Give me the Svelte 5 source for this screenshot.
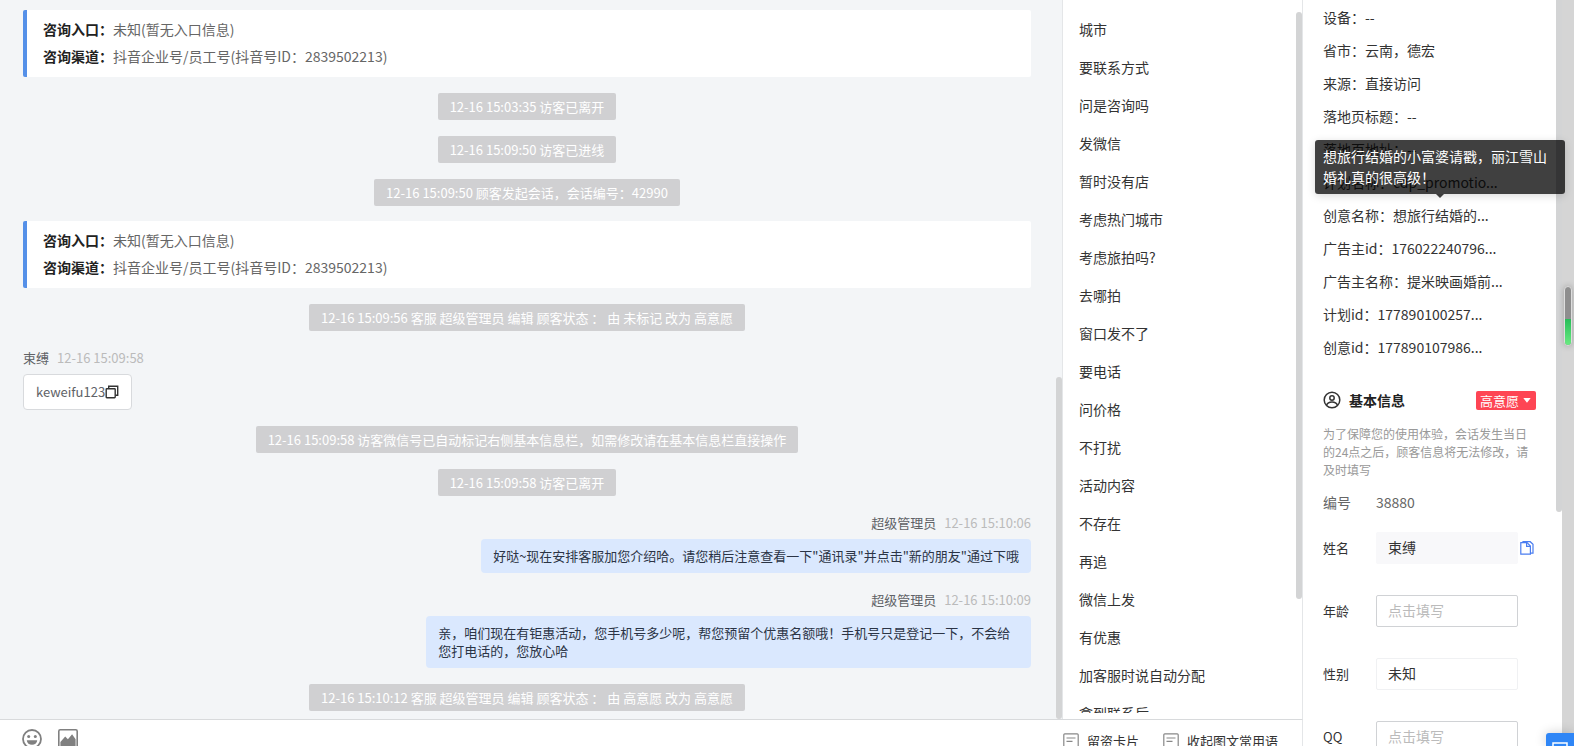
<script>
    const entry = {
        type: 'card',
        rows: [
            ['咨询入口：', '未知(暂无入口信息)'],
            ['咨询渠道：', '抖音企业号/员工号(抖音号ID：2839502213)']
        ]
    };

    const timeline = [
        entry,
        { type: 'notice', text: '12-16 15:03:35 访客已离开' },
        { type: 'notice', text: '12-16 15:09:50 访客已进线' },
        { type: 'notice', text: '12-16 15:09:50 顾客发起会话，会话编号：42990' },
        entry,
        { type: 'notice', text: '12-16 15:09:56 客服 超级管理员 编辑 顾客状态 ： 由 未标记 改为 高意愿' },
        { type: 'message', from: 'visitor', name: '束缚', time: '12-16 15:09:58', text: 'keweifu123' },
        { type: 'notice', text: '12-16 15:09:58 访客微信号已自动标记右侧基本信息栏，如需修改请在基本信息栏直接操作' },
        { type: 'notice', text: '12-16 15:09:58 访客已离开' },
        {
            type: 'message',
            from: 'agent',
            name: '超级管理员',
            time: '12-16 15:10:06',
            text: '好哒~现在安排客服加您介绍哈。请您稍后注意查看一下"通讯录"并点击"新的朋友"通过下哦'
        },
        {
            type: 'message',
            from: 'agent',
            name: '超级管理员',
            time: '12-16 15:10:09',
            text: '亲，咱们现在有钜惠活动，您手机号多少呢，帮您预留个优惠名额哦！手机号只是登记一下，不会给您打电话的，您放心哈'
        },
        { type: 'notice', text: '12-16 15:10:12 客服 超级管理员 编辑 顾客状态 ： 由 高意愿 改为 高意愿' }
    ];

    const phrases = [
        '城市', '要联系方式', '问是咨询吗', '发微信', '暂时没有店', '考虑热门城市',
        '考虑旅拍吗?', '去哪拍', '窗口发不了', '要电话', '问价格', '不打扰', '活动内容',
        '不存在', '再追', '微信上发', '有优惠', '加客服时说自动分配', '拿到联系后'
    ];

    const details = [
        { label: '设备', value: '--' },
        { label: '省市', value: '云南，德宏' },
        { label: '来源', value: '直接访问' },
        { label: '落地页标题', value: '--' },
        { label: '落地页地址', value: '--' },
        { label: '计划名称', value: 'cdp_promotio...' },
        { label: '创意名称', value: '想旅行结婚的...', tip: '想旅行结婚的小富婆请戳，丽江雪山婚礼真的很高级！' },
        { label: '广告主id', value: '176022240796...' },
        { label: '广告主名称', value: '提米映画婚前...' },
        { label: '计划id', value: '177890100257...' },
        { label: '创意id', value: '177890107986...' }
    ];

    let name = '束缚';
    let age = '';
    let gender = '未知';
    let qq = '';
</script>

<div class="page">
    <div class="workspace">
        <div class="panes">
            <section class="chat">
                {#each timeline as item}
                    {#if item.type === 'card'}
                        <div class="card">
                            {#each item.rows as [label, value]}
                                <p><strong>{label}</strong>{value}</p>
                            {/each}
                        </div>
                    {:else if item.type === 'notice'}
                        <p class="notice">{item.text}</p>
                    {:else}
                        <div class="message {item.from}">
                            <div class="meta">
                                <span>{item.name}</span>
                                <time>{item.time}</time>
                            </div>
                            <div class="bubble">
                                {item.text}
                                {#if item.from === 'visitor'}
                                    <button class="icon" aria-label="复制">
                                        <svg width="14" height="14" viewBox="0 0 14 14" fill="none" stroke="#333" stroke-width="1.4">
                                            <rect x="1.2" y="3.7" width="9" height="9" rx="0.6" />
                                            <path d="M3.7 3.5V1.2h9v9h-2.3" />
                                        </svg>
                                    </button>
                                {/if}
                            </div>
                        </div>
                    {/if}
                {/each}
                <div class="thumb chat-thumb"></div>
            </section>

            <nav class="phrases">
                <ul>
                    {#each phrases as phrase}
                        <li><button>{phrase}</button></li>
                    {/each}
                </ul>
                <div class="thumb phrases-thumb"></div>
            </nav>
        </div>

        <footer class="toolbar">
            <button class="icon" aria-label="表情">
                <svg width="20" height="20" viewBox="0 0 20 20">
                    <circle cx="10" cy="10" r="9" fill="none" stroke="#808080" stroke-width="1.8" />
                    <circle cx="6.7" cy="7.6" r="1.5" fill="#808080" />
                    <circle cx="13.3" cy="7.6" r="1.5" fill="#808080" />
                    <path d="M4.8 11.2h10.4a5.2 4.6 0 0 1-10.4 0z" fill="#808080" />
                </svg>
            </button>
            <button class="icon" aria-label="图片">
                <svg width="20" height="20" viewBox="0 0 20 20">
                    <rect x="0.8" y="0.8" width="18.4" height="18.4" rx="1.4" fill="none" stroke="#808080" stroke-width="1.6" />
                    <path d="M2.4 17.6v-4.600l4.800-5.600 2.700 2.800 4.200-5 3.500 5v7.400z" fill="#808080" />
                </svg>
            </button>
            <div class="actions">
                {#each ['留资卡片', '收起图文常用语'] as action}
                    <button>
                        <svg width="16" height="16" viewBox="0 0 16 16" fill="none" stroke="#888" stroke-width="1.2">
                            <rect x="0.8" y="0.8" width="14.4" height="13.4" rx="1" />
                            <path d="M3.5 5h9M3.5 8.4h6" />
                        </svg>
                        {action}
                    </button>
                {/each}
            </div>
        </footer>
    </div>

    <aside class="profile">
        <ul class="details">
            {#each details as detail}
                <li>
                    {detail.label}：{detail.value}
                    {#if detail.tip}
                        <div class="tooltip" role="tooltip">{detail.tip}</div>
                    {/if}
                </li>
            {/each}
        </ul>

        <header>
            <svg width="18" height="18" viewBox="0 0 18 18" fill="none" stroke="#333" stroke-width="1.5">
                <circle cx="9" cy="9" r="7.8" />
                <circle cx="9" cy="7" r="2.2" />
                <path d="M3.6 14.3c.8-2.3 2.8-3.2 5.4-3.2s4.600.9 5.400 3.200" />
            </svg>
            <h2>基本信息</h2>
            <button class="tag">
                高意愿
                <svg width="8" height="5" viewBox="0 0 8 5"><path d="M0.300 0h7.400L4 4.800z" fill="#fff" /></svg>
            </button>
        </header>

        <p class="hint">为了保障您的使用体验，会话发生当日的24点之后，顾客信息将无法修改，请及时填写</p>

        <div class="number"><span>编号</span><span>38880</span></div>

        <form>
            <div class="field">
                <label for="name">姓名</label>
                <input id="name" class="filled" bind:value={name} />
                <button type="button" class="icon" aria-label="复制姓名">
                    <svg width="14" height="14" viewBox="0 0 14 14" fill="none" stroke="#4a7df0" stroke-width="1.2">
                        <path d="M0.800 1.600h6.200l3.400 3.400v8.200H0.800z" />
                        <path d="M6.600 1.800v3.600h3.600" />
                        <path d="M3 1.400V0.700h7.200l2.800 2.600v8.900h-2.400" />
                    </svg>
                </button>
            </div>
            <div class="field">
                <label for="age">年龄</label>
                <input id="age" placeholder="点击填写" bind:value={age} />
            </div>
            <div class="field">
                <label for="gender">性别</label>
                <select id="gender" bind:value={gender}>
                    <option>未知</option>
                    <option>男</option>
                    <option>女</option>
                </select>
            </div>
            <div class="field">
                <label for="qq">QQ</label>
                <input id="qq" placeholder="点击填写" bind:value={qq} />
            </div>
        </form>
        <div class="thumb profile-thumb"></div>
    </aside>

    <div class="edge"></div>
    <div class="meter"><span></span></div>
    <button class="float" aria-label="消息">
        <svg width="16" height="14" viewBox="0 0 16 14" fill="none" stroke="#fff" stroke-width="1.500">
            <path d="M1 1h14v10H9l-3 2v-2H1z" />
        </svg>
    </button>
</div>

<style>
    :global(body) {
        margin: 0;
        overflow: hidden;
    }

    .page {
        position: relative;
        display: flex;
        height: 100vh;
        overflow: hidden;
        background: #fff;
        color: #333;
        font-family: "Noto Sans CJK SC", sans-serif;
        font-size: 14px;
    }

    .page * {
        box-sizing: border-box;
    }

    p, ul, h2 {
        margin: 0;
        padding: 0;
    }

    ul {
        list-style: none;
    }

    button, input, select {
        margin: 0;
        padding: 0;
        border: 0;
        background: none;
        color: inherit;
        font: inherit;
    }

    button {
        cursor: pointer;
    }

    svg {
        display: block;
        flex: none;
    }

    .icon {
        display: flex;
    }

    .thumb {
        position: absolute;
        right: 0;
        width: 6px;
        border-radius: 3px;
        background: #d3d4d5;
    }

    .workspace {
        flex: 1;
        min-width: 0;
        display: flex;
        flex-direction: column;
    }

    .panes {
        flex: 1;
        min-height: 0;
        display: flex;
    }

    .chat {
        position: relative;
        flex: 1;
        min-width: 0;
        display: flex;
        flex-direction: column;
        align-items: center;
        gap: 16px;
        padding: 11px 31px 8px 23px;
        background: #f3f5f7;
        overflow: hidden;
    }

    .chat-thumb {
        bottom: 0;
        height: 342px;
    }

    .card {
        align-self: stretch;
        margin-top: -1px;
        padding: 6px 16px 7px;
        border-left: 4px solid #5590e8;
        border-radius: 2px;
        background: #fff;
        line-height: 27px;
        color: #666;
    }

    .card strong {
        color: #222;
    }

    .notice {
        padding: 0 12px;
        border-radius: 2px;
        background: #d0d0d2;
        color: #fff;
        font-size: 13px;
        line-height: 27px;
    }

    .message {
        align-self: stretch;
        display: flex;
        flex-direction: column;
        align-items: flex-start;
        gap: 5px;
        font-size: 13px;
    }

    .agent {
        align-items: flex-end;
    }

    .meta {
        display: flex;
        gap: 8px;
        line-height: 22px;
        color: #606266;
    }

    .meta time {
        color: #bbb;
    }

    .bubble {
        display: flex;
        align-items: center;
        max-width: 60%;
        padding: 8px 12px;
        border: 1px solid #d8dadd;
        border-radius: 4px;
        background: #fff;
        line-height: 18px;
        color: #606266;
    }

    .agent .bubble {
        border: 0;
        background: #dae8fe;
        color: #2b3445;
    }

    .phrases {
        position: relative;
        width: 241px;
        padding: 10px 0 6px;
        border-left: 1px solid #e4e6e8;
        border-right: 1px solid #e4e6e8;
    }

    .phrases ul {
        height: 100%;
        overflow: hidden;
    }

    .phrases li button {
        display: block;
        width: 100%;
        padding: 0 16px;
        line-height: 38px;
        text-align: left;
    }

    .phrases-thumb {
        top: 12px;
        height: 587px;
    }

    .toolbar {
        display: flex;
        align-items: flex-start;
        gap: 16px;
        height: 27px;
        padding: 9px 24px 0 22px;
        border-top: 1px solid #d8dadc;
        border-right: 1px solid #e4e6e8;
        overflow: hidden;
    }

    .actions {
        display: flex;
        gap: 24px;
        margin-left: auto;
        padding-top: 3px;
        font-size: 13px;
        line-height: 18px;
    }

    .actions button {
        display: flex;
        align-items: center;
        gap: 8px;
    }

    .profile {
        position: relative;
        width: 259px;
        padding: 1px 26px 0 20px;
    }

    .profile-thumb {
        top: 0;
        height: 512px;
        border-radius: 0 0 3px 3px;
    }

    .details li {
        position: relative;
        line-height: 33px;
        white-space: nowrap;
    }

    .tooltip {
        position: absolute;
        z-index: 2;
        left: -8px;
        bottom: calc(100% + 5px);
        width: 250px;
        padding: 6px 8px;
        border-radius: 3px;
        background: rgba(0, 0, 0, 0.75);
        box-shadow: 0 2px 8px rgba(0, 0, 0, 0.15);
        color: #fff;
        line-height: 21px;
        white-space: normal;
    }

    .tooltip::after {
        content: "";
        position: absolute;
        top: 100%;
        left: 50%;
        margin-left: -4px;
        border: 4px solid transparent;
        border-top-color: rgba(0, 0, 0, 0.75);
        border-bottom: 0;
    }

    header {
        display: flex;
        align-items: center;
        gap: 8px;
        margin-top: 24px;
        line-height: 24px;
    }

    h2 {
        font-size: 14px;
        color: #222;
    }

    .tag {
        display: flex;
        align-items: center;
        gap: 4px;
        height: 19px;
        margin-left: auto;
        padding: 0 5px 0 4px;
        border-radius: 2px;
        background: #fe4554;
        color: #fff;
        font-size: 13px;
        line-height: 19px;
    }

    .hint {
        margin-top: 13px;
        font-size: 12px;
        line-height: 18px;
        color: #999;
    }

    .number {
        display: grid;
        grid-template-columns: 53px 1fr;
        margin-top: 11px;
        line-height: 24px;
        color: #666;
    }

    form {
        display: flex;
        flex-direction: column;
        gap: 31px;
        margin-top: 18px;
    }

    .field {
        display: grid;
        grid-template-columns: 53px 142px 14px;
        align-items: center;
        height: 32px;
    }

    .field label {
        padding-bottom: 2px;
        font-size: 13px;
    }

    .field .icon {
        margin-left: 2px;
    }

    input, select {
        width: 142px;
        height: 32px;
        padding: 0 11px 2px;
        border: 1px solid #d0d2d5;
        border-radius: 2px;
    }

    select {
        appearance: none;
        border-color: #f0f1f3;
    }

    .filled {
        border-color: #f8f8fa;
        background: #f8f8fa;
    }

    input::placeholder {
        color: #bbb;
    }

    .edge {
        width: 12px;
        background: #d5d5d5;
    }

    .meter {
        position: absolute;
        right: 2px;
        top: 286px;
        display: flex;
        align-items: flex-end;
        width: 8px;
        height: 60px;
        border: 1px solid #ddd;
        border-radius: 4px;
        background: #8e8e8e;
        box-shadow: 0 0 6px rgba(0, 0, 0, 0.25);
        overflow: hidden;
    }

    .meter span {
        width: 100%;
        height: 45%;
        background: linear-gradient(#27bd58, #6bea82);
    }

    .float {
        position: absolute;
        right: 0;
        bottom: 0;
        width: 28px;
        height: 13px;
        padding: 9px 0 0 6px;
        border-radius: 3px 0 0 0;
        background: #2f86f6;
        box-shadow: 0 0 12px rgba(0, 0, 0, 0.2);
        overflow: hidden;
    }
</style>
